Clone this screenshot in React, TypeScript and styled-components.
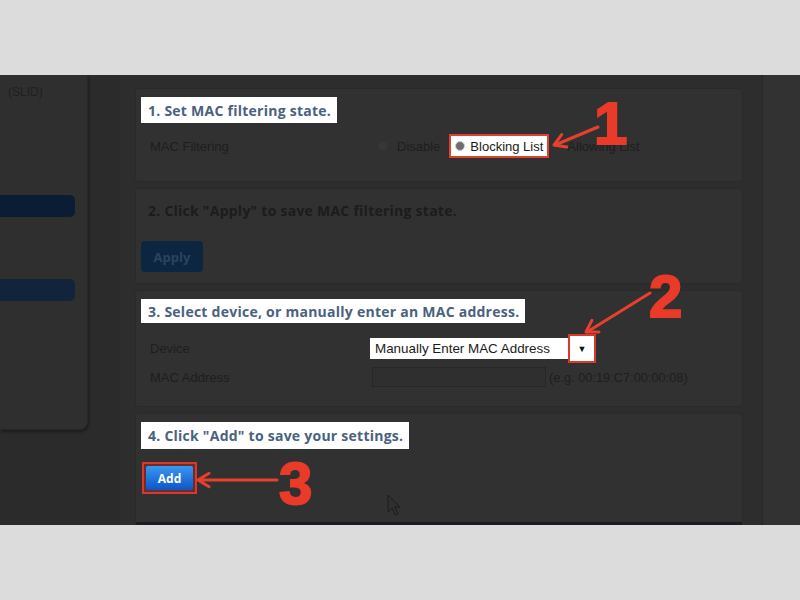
import styled, { createGlobalStyle } from "styled-components";

const GlobalStyle = createGlobalStyle`
  html, body {
    margin: 0;
    padding: 0;
    background: #dcdcdc;
    font-family: "Liberation Sans", Arial, sans-serif;
  }
`;

const Page = styled.div`
  width: 800px;
  height: 600px;
  display: flex;
  flex-direction: column;
  overflow: hidden;
`;

const Band = styled.div`
  height: 75px;
  background: #dcdcdc;
  flex-shrink: 0;
`;

const Screen = styled.div`
  position: relative;
  height: 450px;
  background: #2b2b2b;
  display: flex;
  align-items: flex-start;
  overflow: hidden;
`;

const Sidebar = styled.div`
  width: 88px;
  height: 355px;
  flex-shrink: 0;
  background: #2f2f2f;
  border-right: 1px solid #272727;
  border-bottom: 1px solid #272727;
  border-radius: 0 0 8px 0;
  box-shadow: 1px 2px 3px rgba(0, 0, 0, 0.35);
  box-sizing: border-box;
  padding-top: 10px;
  display: flex;
  flex-direction: column;
`;

const SideText = styled.div`
  font-size: 12px;
  color: #202020;
  padding-left: 8px;
  white-space: nowrap;
`;

const SideBar = styled.div<{ $top: number; $color: string }>`
  margin-top: ${({ $top }) => $top}px;
  width: 75px;
  height: 22px;
  border-radius: 0 5px 5px 0;
  background: ${({ $color }) => $color};
`;

const Main = styled.div`
  margin-left: 30px;
  align-self: stretch;
  width: 645px;
  flex-shrink: 0;
  box-sizing: border-box;
  background: #2d2d2d;
  border-left: 1px solid #282828;
  border-right: 1px solid #282828;
  padding: 13px 19px 0 16px;
  display: flex;
  flex-direction: column;
  gap: 6px;
`;

const RightCol = styled.div`
  flex: 1;
  align-self: stretch;
  background: #323232;
`;

const Section = styled.div<{ $h: number; $last?: boolean }>`
  height: ${({ $h }) => $h}px;
  flex-shrink: 0;
  box-sizing: border-box;
  background: #313131;
  border: 1px solid #2a2a2a;
  border-bottom: ${({ $last }) => ($last ? "3px solid #1c1d22" : "1px solid #2a2a2a")};
  border-radius: 3px;
  padding: 8px 0 0 5px;
  display: flex;
  flex-direction: column;
  align-items: flex-start;
`;

const Heading = styled.div<{ $lit?: boolean; $h?: number }>`
  height: ${({ $h }) => $h ?? 26}px;
  display: flex;
  align-items: center;
  padding: 0 6px 0 7px;
  background: ${({ $lit }) => ($lit ? "#ffffff" : "transparent")};
  color: ${({ $lit }) => ($lit ? "#4a617f" : "#1c1c1c")};
  font-family: "Open Sans", "Liberation Sans", sans-serif;
  font-weight: 700;
  font-size: 14px;
  letter-spacing: 0.25px;
  white-space: nowrap;
`;

const Row = styled.div<{ $top: number }>`
  margin-top: ${({ $top }) => $top}px;
  display: grid;
  grid-template-columns: 222px 1fr;
  align-items: center;
  padding-left: 9px;
  width: 100%;
  box-sizing: border-box;
  height: 24px;
`;

const Label = styled.span`
  font-size: 13px;
  color: #1e1e1e;
`;

const Options = styled.div`
  display: flex;
  align-items: center;
`;

const Option = styled.label<{ $gap: number }>`
  display: flex;
  align-items: center;
  margin-left: ${({ $gap }) => $gap}px;
  font-size: 13px;
  color: #1e1e1e;
`;

const Radio = styled.span<{ $lit?: boolean }>`
  width: 8px;
  height: 8px;
  border-radius: 50%;
  margin-right: ${({ $lit }) => ($lit ? 5 : 9)}px;
  background: ${({ $lit }) => ($lit ? "#6d6d6d" : "#373737")};
  border: 1px solid ${({ $lit }) => ($lit ? "#cfcfcf" : "#333")};
`;

const Highlight = styled.div`
  display: flex;
  align-items: center;
  height: 24px;
  box-sizing: border-box;
  margin-left: 9px;
  padding: 0 4px 0 4px;
  border: 2px solid #e2402f;
  background: #ffffff;
  font-size: 13px;
  color: #1a1a1a;
`;

const ApplyButton = styled.div`
  margin-top: 18px;
  width: 62px;
  height: 31px;
  border-radius: 4px;
  background: #0c2641;
  display: flex;
  align-items: center;
  justify-content: center;
  font-family: "Open Sans", "Liberation Sans", sans-serif;
  font-weight: 700;
  font-size: 13px;
  color: #28445f;
`;

const SelectBox = styled.div`
  display: flex;
  align-items: center;
  margin-left: -2px;
`;

const SelectField = styled.div`
  width: 198px;
  height: 21px;
  background: #ffffff;
  box-sizing: border-box;
  padding-left: 5px;
  display: flex;
  align-items: center;
  font-size: 13.4px;
  color: #1a1a1a;
`;

const SelectArrow = styled.div`
  width: 28px;
  height: 29px;
  box-sizing: border-box;
  border: 2px solid #d9392c;
  background: #ffffff;
  display: flex;
  align-items: center;
  justify-content: center;
  font-size: 9px;
  color: #111;
`;

const InputRow = styled.div`
  display: flex;
  align-items: center;
`;

const TextInput = styled.div`
  width: 174px;
  height: 20px;
  box-sizing: border-box;
  border: 1px solid #272727;
  background: #2f2f2f;
`;

const Hint = styled.span`
  margin-left: 3px;
  font-size: 12.8px;
  color: #1e1e1e;
`;

const AddFrame = styled.div`
  margin-top: 13px;
  margin-left: 1px;
  width: 55px;
  height: 32px;
  box-sizing: border-box;
  border: 2px solid #d8392d;
  padding: 2px;
  background: #6b2c2a;
`;

const AddButton = styled.div`
  height: 100%;
  border-radius: 2px;
  background: linear-gradient(#3a97f0, #0c56c8);
  display: flex;
  align-items: center;
  justify-content: center;
  font-family: "Open Sans", "Liberation Sans", sans-serif;
  font-weight: 700;
  font-size: 12px;
  color: #ffffff;
`;

const Overlay = styled.svg`
  position: absolute;
  inset: 0;
  pointer-events: none;
`;

const Step = styled.span<{ $x: number; $y: number; $size: number }>`
  position: absolute;
  left: ${({ $x }) => $x}px;
  top: ${({ $y }) => $y}px;
  font-family: "Liberation Sans", Arial, sans-serif;
  font-weight: 700;
  font-size: ${({ $size }) => $size}px;
  line-height: 1;
  color: #ea3a29;
  -webkit-text-stroke: 2px #ea3a29;
`;

function Arrow({ x1, y1, x2, y2 }: { x1: number; y1: number; x2: number; y2: number }) {
  const a = Math.atan2(y1 - y2, x1 - x2);
  const l = 13;
  const s = 0.55;
  const p1 = `${x2 + l * Math.cos(a + s)},${y2 + l * Math.sin(a + s)}`;
  const p2 = `${x2 + l * Math.cos(a - s)},${y2 + l * Math.sin(a - s)}`;
  return (
    <g stroke="#e8402f" strokeWidth={3} fill="none" strokeLinecap="round" strokeLinejoin="round">
      <line x1={x1} y1={y1} x2={x2 + 1} y2={y2} />
      <polyline points={`${p1} ${x2},${y2} ${p2}`} />
    </g>
  );
}

export default function App() {
  return (
    <>
      <GlobalStyle />
      <Page>
        <Band />
        <Screen>
          <Sidebar>
            <SideText>(SLID)</SideText>
            <SideBar $top={96} $color="#0b1d35" />
            <SideBar $top={62} $color="#11243c" />
          </Sidebar>
          <Main>
            <Section $h={94}>
              <Heading $lit>1. Set MAC filtering state.</Heading>
              <Row $top={11}>
                <Label>MAC Filtering</Label>
                <Options>
                  <Option $gap={6}>
                    <Radio />
                    Disable
                  </Option>
                  <Highlight>
                    <Radio $lit />
                    Blocking List
                  </Highlight>
                  <Option $gap={18}>Allowing List</Option>
                </Options>
              </Row>
            </Section>
            <Section $h={96}>
              <Heading>2. Click "Apply" to save MAC filtering state.</Heading>
              <ApplyButton>Apply</ApplyButton>
            </Section>
            <Section $h={117}>
              <Heading $lit $h={24}>3. Select device, or manually enter an MAC address.</Heading>
              <Row $top={11}>
                <Label>Device</Label>
                <SelectBox>
                  <SelectField>Manually Enter MAC Address</SelectField>
                  <SelectArrow>▼</SelectArrow>
                </SelectBox>
              </Row>
              <Row $top={7}>
                <Label>MAC Address</Label>
                <InputRow>
                  <TextInput />
                  <Hint>(e.g. 00:19:C7:00:00:08)</Hint>
                </InputRow>
              </Row>
            </Section>
            <Section $h={112} $last>
              <Heading $lit $h={27}>4. Click "Add" to save your settings.</Heading>
              <AddFrame>
                <AddButton>Add</AddButton>
              </AddFrame>
            </Section>
          </Main>
          <RightCol />
          <Overlay width="800" height="450" viewBox="0 0 800 450">
            <Arrow x1={598} y1={52} x2={554} y2={70} />
            <Arrow x1={650} y1={218} x2={586} y2={257} />
            <Arrow x1={277} y1={405} x2={198} y2={405} />
            <path
              d="M388 420 L388 437 L392 433 L395 440 L398 439 L395 432 L400 432 Z"
              fill="#2f2f2f"
              stroke="#1c1c1c"
              strokeWidth={1}
            />
          </Overlay>
          <Step $x={594} $y={19} $size={60}>1</Step>
          <Step $x={649} $y={192} $size={60}>2</Step>
          <Step $x={279} $y={379} $size={60}>3</Step>
        </Screen>
        <Band />
      </Page>
    </>
  );
}
